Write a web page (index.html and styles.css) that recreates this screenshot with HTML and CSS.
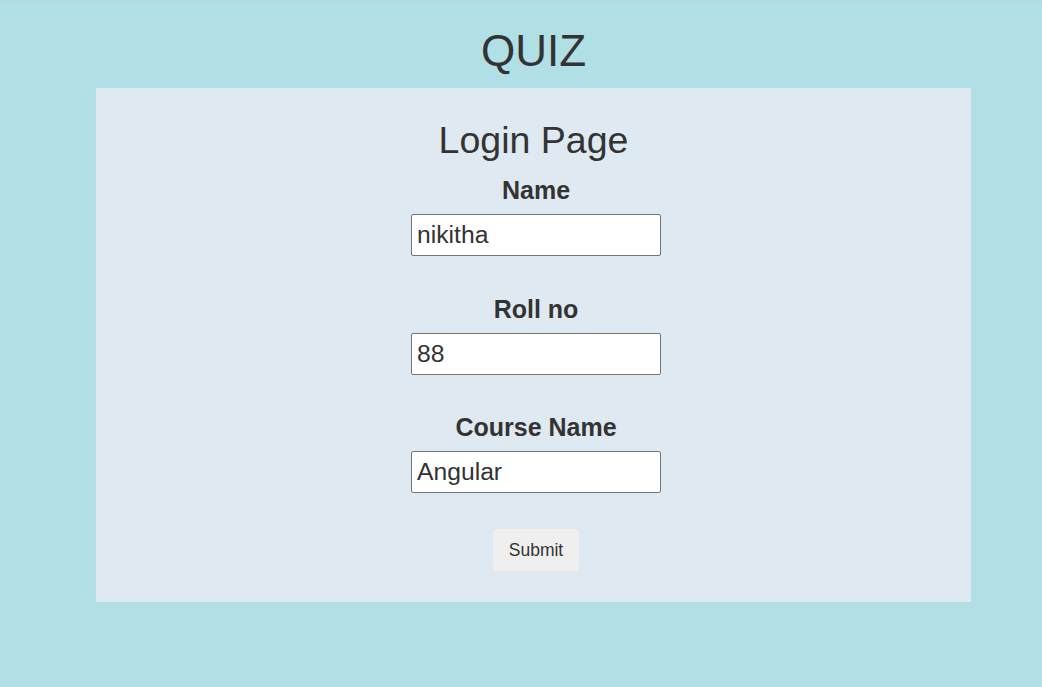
FILE: index.html
```html
<!DOCTYPE html>
<html lang="en">
<head>
<meta charset="utf-8">
<title>Quiz</title>
<link rel="stylesheet" href="styles.css">
</head>
<body>
<div class="page">
  <h1 class="title">QUIZ</h1>
  <form class="card">
    <h2 class="card-title">Login Page</h2>
    <div class="fields">
      <div class="field">
        <label class="field-label" for="name">Name</label>
        <input class="field-input" id="name" type="text" value="nikitha">
      </div>
      <div class="field">
        <label class="field-label" for="roll">Roll no</label>
        <input class="field-input" id="roll" type="text" value="88">
      </div>
      <div class="field">
        <label class="field-label" for="course">Course Name</label>
        <input class="field-input" id="course" type="text" value="Angular">
      </div>
      <button class="submit" type="button">Submit</button>
    </div>
  </form>
</div>
</body>
</html>
```
FILE: styles.css
```css
html, body {
  margin: 0;
  padding: 0;
}
body {
  background: #b0dfe5;
  border-top: 1px solid #bcd6da;
  font-family: "Liberation Sans", Arial, sans-serif;
  color: #333333;
  height: 686px;
}
.page {
  width: 875px;
  padding-left: 96px;
  display: flex;
  flex-direction: column;
}
.title {
  margin: 0;
  padding-top: 25px;
  font-size: 44px;
  line-height: 50px;
  font-weight: normal;
  text-align: center;
  margin-bottom: 12px;
}
.card {
  background: #dfe9f1;
  display: flex;
  flex-direction: column;
  align-items: center;
  padding: 31px 0 31px;
  margin: 0;
}
.card-title {
  margin: 0 0 15px;
  font-size: 37.5px;
  line-height: 42px;
  font-weight: normal;
}
.fields {
  display: flex;
  flex-direction: column;
  align-items: center;
  margin-left: 5px;
}
.field {
  display: flex;
  flex-direction: column;
  align-items: center;
  margin-bottom: 38.5px;
}
.field:last-of-type {
  margin-bottom: 36px;
}
.field-label {
  font-size: 25px;
  line-height: 28px;
  font-weight: bold;
  margin-bottom: 10px;
}
.field-input {
  box-sizing: border-box;
  width: 250px;
  height: 42px;
  border: 1px solid #767676;
  border-radius: 2px;
  background: #ffffff;
  padding: 0 5px;
  font-family: "Liberation Sans", Arial, sans-serif;
  font-size: 24.7px;
  color: #333333;
  outline: none;
}
.submit {
  box-sizing: border-box;
  height: 42px;
  padding: 0 16px;
  border: none;
  border-radius: 4px;
  background: #efefef;
  font-family: "Liberation Sans", Arial, sans-serif;
  font-size: 17.5px;
  color: #333333;
  cursor: pointer;
}
```
